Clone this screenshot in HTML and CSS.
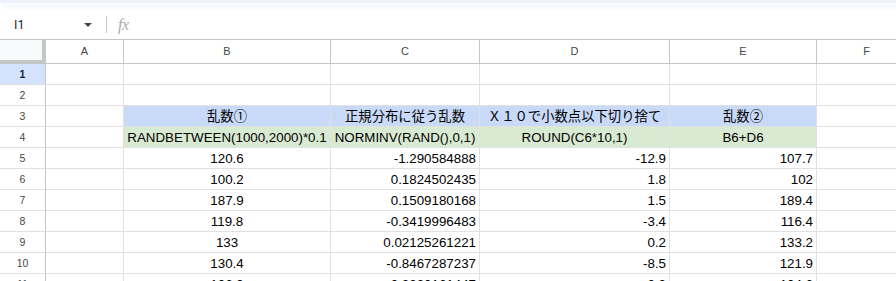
FILE: index.html
```html
<!DOCTYPE html>
<html lang="ja">
<head>
<meta charset="utf-8">
<link rel="stylesheet" href="styles.css">
</head>
<body>
<div class="toolbar"></div>
<div class="fbar">
  <div class="namebox">
    <span class="ref">I1</span>
    <svg class="arrow" width="8" height="4" viewBox="0 0 8 4"><polygon points="0,0 8,0 4,4" fill="#444746"/></svg>
  </div>
  <div class="sep"></div>
  <span class="fx">fx</span>
</div>
<div class="grid">
  <div class="corner"></div>
  <div class="h">A</div><div class="h">B</div><div class="h">C</div><div class="h">D</div><div class="h">E</div><div class="h">F</div>

  <div class="r sel">1</div>
  <div class="c"></div><div class="c"></div><div class="c"></div><div class="c"></div><div class="c"></div><div class="c"></div>

  <div class="r">2</div>
  <div class="c"></div><div class="c"></div><div class="c"></div><div class="c"></div><div class="c"></div><div class="c"></div>

  <div class="r">3</div>
  <div class="c"></div>
  <div class="c ctr blue">乱数①</div>
  <div class="c ctr blue">正規分布に従う乱数</div>
  <div class="c ctr blue">Ｘ１０で小数点以下切り捨て</div>
  <div class="c ctr blue">乱数②</div>
  <div class="c"></div>

  <div class="r">4</div>
  <div class="c"></div>
  <div class="c ctr green">RANDBETWEEN(1000,2000)*0.1</div>
  <div class="c ctr green">NORMINV(RAND(),0,1)</div>
  <div class="c ctr green">ROUND(C6*10,1)</div>
  <div class="c ctr green">B6+D6</div>
  <div class="c"></div>

  <div class="r">5</div>
  <div class="c"></div><div class="c ctr">120.6</div><div class="c rt">-1.290584888</div><div class="c rt">-12.9</div><div class="c rt">107.7</div><div class="c"></div>

  <div class="r">6</div>
  <div class="c"></div><div class="c ctr">100.2</div><div class="c rt">0.1824502435</div><div class="c rt">1.8</div><div class="c rt">102</div><div class="c"></div>

  <div class="r">7</div>
  <div class="c"></div><div class="c ctr">187.9</div><div class="c rt">0.1509180168</div><div class="c rt">1.5</div><div class="c rt">189.4</div><div class="c"></div>

  <div class="r">8</div>
  <div class="c"></div><div class="c ctr">119.8</div><div class="c rt">-0.3419996483</div><div class="c rt">-3.4</div><div class="c rt">116.4</div><div class="c"></div>

  <div class="r">9</div>
  <div class="c"></div><div class="c ctr">133</div><div class="c rt">0.02125261221</div><div class="c rt">0.2</div><div class="c rt">133.2</div><div class="c"></div>

  <div class="r">10</div>
  <div class="c"></div><div class="c ctr">130.4</div><div class="c rt">-0.8467287237</div><div class="c rt">-8.5</div><div class="c rt">121.9</div><div class="c"></div>

  <div class="r">11</div>
  <div class="c"></div><div class="c ctr">106.9</div><div class="c rt">-0.2330161447</div><div class="c rt">-2.3</div><div class="c rt">104.6</div><div class="c"></div>
</div>
</body>
</html>
```

FILE: styles.css
```css
html, body {
  margin: 0;
  padding: 0;
  background: #ffffff;
  overflow: hidden;
  width: 896px;
  height: 281px;
}
body {
  font-family: "Liberation Sans", Arial, "Noto Sans CJK JP", sans-serif;
}
.toolbar {
  height: 10px;
  box-sizing: border-box;
  background: #f8fafd;
  border-top: 3px solid #eef1f7;
  border-bottom-left-radius: 12px;
}
.fbar {
  height: 29px;
  display: flex;
  align-items: center;
}
.namebox {
  width: 106px;
  display: flex;
  align-items: center;
  box-sizing: border-box;
  padding-left: 14px;
  padding-right: 14px;
}
.ref {
  flex: 1;
  font-family: "Roboto", "Liberation Sans", sans-serif;
  font-size: 12.5px;
  color: #1f1f1f;
}
.arrow {
  display: block;
}
.sep {
  width: 1px;
  height: 17px;
  background: #c7c7c7;
}
.fx {
  margin-left: 11px;
  font-family: "Liberation Serif", serif;
  font-style: italic;
  font-size: 16px;
  color: #a8abae;
  letter-spacing: -0.5px;
}
.grid {
  display: grid;
  grid-template-columns: 46px 78px 207px 149px 190px 147px 100px;
  grid-template-rows: 25px;
  grid-auto-rows: 21px;
  width: 917px;
}
.grid > div {
  box-sizing: border-box;
  overflow: hidden;
  white-space: nowrap;
}
.corner {
  background: #f8f9fa;
  border-top: 1px solid #c4c7c5;
  border-right: 4px solid #c4c7c5;
  border-bottom: 4px solid #c4c7c5;
}
.h {
  border-top: 1px solid #c4c7c5;
  border-right: 1px solid #c4c7c5;
  border-bottom: 1px solid #c4c7c5;
  font-size: 11px;
  color: #444746;
  text-align: center;
  line-height: 23px;
}
.r {
  border-right: 1px solid #c4c7c5;
  border-bottom: 1px solid #e1e1e1;
  font-size: 10.5px;
  color: #444746;
  text-align: center;
  line-height: 20px;
}
.r.sel {
  background: #d3e3fd;
  color: #0b1f45;
  font-weight: bold;
}
.c {
  border-right: 1px solid #e1e1e1;
  border-bottom: 1px solid #e1e1e1;
  font-size: 13.33px;
  color: #000000;
  line-height: 22px;
  padding: 0 3px;
}
.ctr {
  text-align: center;
}
.rt {
  text-align: right;
}
.blue {
  background: #c9daf8;
}
.green {
  background: #d9ead3;
}
```
